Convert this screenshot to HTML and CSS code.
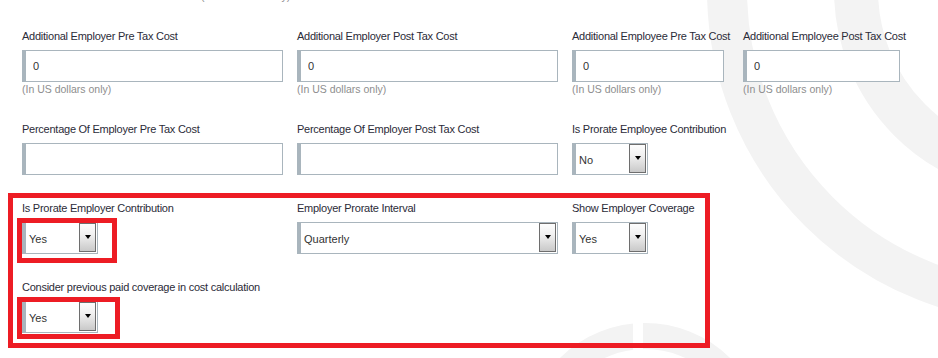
FILE: index.html
```html
<!DOCTYPE html>
<html lang="en">
<head>
    <meta charset="UTF-8">
    <meta name="viewport" content="width=device-width, initial-scale=1.0">
    <title>Employer Cost Settings</title>
    <link rel="stylesheet" href="styles.css">
</head>
<body>
    <div class="page">
        <svg class="watermark" width="938" height="358" viewBox="0 0 938 358">
            <circle class="ring-outer" cx="1040" cy="-10" r="313" />
            <circle class="ring-inner" cx="1040" cy="-10" r="184" />
            <circle class="ring-low" cx="645" cy="444" r="108" />
            <rect class="ring-gap" x="633" y="300" width="10" height="60" />
        </svg>

        <div class="form">
            <p class="hint prev">(In US dollars only)</p>

            <div class="row">
                <div class="field">
                    <label class="label">Additional Employer Pre Tax Cost</label>
                    <input class="input w-wide" type="text" value="0">
                    <p class="hint">(In US dollars only)</p>
                </div>
                <div class="field">
                    <label class="label">Additional Employer Post Tax Cost</label>
                    <input class="input w-wide" type="text" value="0">
                    <p class="hint">(In US dollars only)</p>
                </div>
                <div class="field">
                    <label class="label">Additional Employee Pre Tax Cost</label>
                    <input class="input w-mid" type="text" value="0">
                    <p class="hint">(In US dollars only)</p>
                </div>
                <div class="field">
                    <label class="label">Additional Employee Post Tax Cost</label>
                    <input class="input w-last" type="text" value="0">
                    <p class="hint">(In US dollars only)</p>
                </div>
            </div>

            <div class="row">
                <div class="field">
                    <label class="label">Percentage Of Employer Pre Tax Cost</label>
                    <input class="input w-wide" type="text">
                </div>
                <div class="field">
                    <label class="label">Percentage Of Employer Post Tax Cost</label>
                    <input class="input w-wide" type="text">
                </div>
                <div class="field">
                    <label class="label">Is Prorate Employee Contribution</label>
                    <div class="select w-small"><span class="value">No</span><span class="caret"></span></div>
                </div>
            </div>

            <div class="highlight">
                <div class="row">
                    <div class="field">
                        <label class="label">Is Prorate Employer Contribution</label>
                        <div class="marked">
                            <div class="select w-small"><span class="value">Yes</span><span class="caret"></span></div>
                            <span class="mark mark-a"></span>
                        </div>
                    </div>
                    <div class="field">
                        <label class="label">Employer Prorate Interval</label>
                        <div class="select w-wide"><span class="value">Quarterly</span><span class="caret"></span></div>
                    </div>
                    <div class="field">
                        <label class="label">Show Employer Coverage</label>
                        <div class="select w-small"><span class="value">Yes</span><span class="caret"></span></div>
                    </div>
                </div>

                <div class="row">
                    <div class="field span-all">
                        <label class="label">Consider previous paid coverage in cost calculation</label>
                        <div class="marked">
                            <div class="select w-small"><span class="value">Yes</span><span class="caret"></span></div>
                            <span class="mark mark-b"></span>
                        </div>
                    </div>
                </div>
            </div>
        </div>
    </div>
</body>
</html>
```

FILE: styles.css
```css
body {
    margin: 0;
    background: #fff;
    font-family: 'Liberation Sans', Arial, sans-serif;
    color: #333;
    overflow: hidden;
}
.page {
    position: relative;
    width: 938px;
    height: 358px;
    overflow: hidden;
}
.watermark {
    position: absolute;
    top: 0;
    left: 0;
}
.watermark circle {
    fill: none;
    stroke: #f3f3f3;
}
.ring-outer { stroke-width: 40; }
.ring-inner { stroke-width: 44; }
.ring-low { stroke-width: 26; }
.ring-gap { fill: #fff; }
.form {
    position: relative;
}
.row {
    display: grid;
    grid-template-columns: 275px 275px 171px 1fr;
    padding-left: 22px;
}
.row + .row {
    margin-top: 26px;
}
.prev + .row {
    margin-top: 26px;
}
.field {
    display: flex;
    flex-direction: column;
    align-items: flex-start;
}
.span-all {
    grid-column: 1 / -1;
}
.label {
    display: block;
    font-size: 11px;
    line-height: 14px;
    letter-spacing: -0.25px;
    color: #2b2b38;
    margin-bottom: 7px;
    white-space: nowrap;
}
.input, .select {
    box-sizing: border-box;
    height: 32px;
    margin: 0;
    border: 1px solid #a9b5bd;
    border-left: 4px solid #a9b5bd;
    background: #fff;
    font-family: 'Liberation Sans', Arial, sans-serif;
    font-size: 11px;
    color: #333;
}
.input {
    padding: 0 0 0 7px;
    outline: none;
}
.w-wide { width: 261px; }
.w-mid { width: 152px; }
.w-last { width: 157px; }
.w-small { width: 76px; }
.hint {
    margin: 1px 0 0;
    font-size: 10.5px;
    line-height: 13px;
    color: #8e8e8e;
    white-space: nowrap;
}
.prev {
    margin: -10px 0 0 201px;
}
.select {
    display: flex;
    align-items: stretch;
    padding: 0;
}
.select .value {
    flex: 1;
    display: flex;
    align-items: center;
    padding-left: 3px;
    padding-top: 1px;
}
.caret {
    width: 15px;
    margin: 0 1px 1px 0;
    border: 1px solid #6e6e6e;
    background: linear-gradient(#fdfdfd, #f0f0f0 40%, #c9c9c9);
    display: flex;
    align-items: center;
    justify-content: center;
}
.caret::after {
    content: "";
    border-left: 3.5px solid transparent;
    border-right: 3.5px solid transparent;
    border-top: 4px solid #000;
    margin-top: -2px;
}
.highlight {
    box-sizing: border-box;
    width: 702px;
    margin: 18px 0 0 8px;
    padding: 3px 0 10px 0;
    border: 5px solid #ed1c24;
}
.highlight .row {
    padding-left: 9px;
}
.marked {
    position: relative;
}
.mark {
    position: absolute;
    left: -5px;
    top: -4px;
    box-sizing: border-box;
    border: 5px solid #ed1c24;
}
.mark-a {
    width: 100px;
    height: 45px;
}
.mark-b {
    width: 103px;
    height: 42px;
}
```
